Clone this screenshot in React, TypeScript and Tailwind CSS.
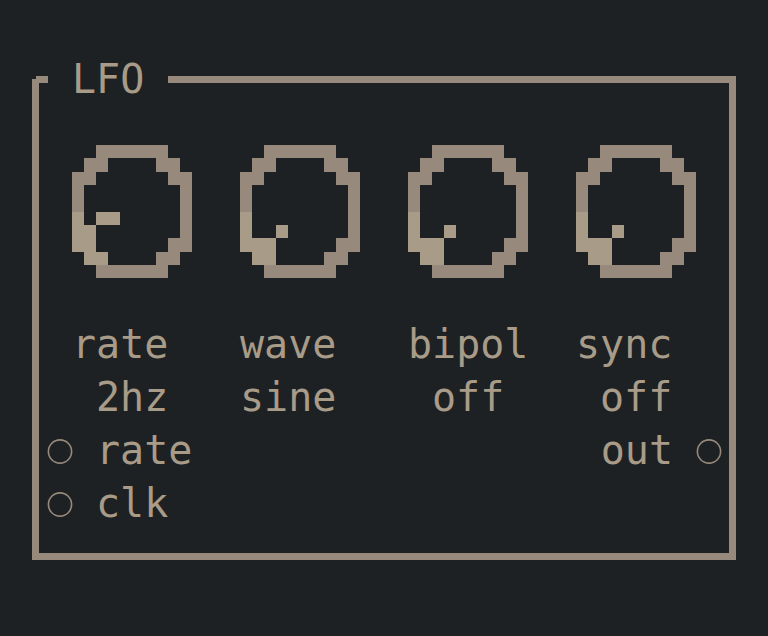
import React from "react";

const DARK = "#978a7c";
const LIGHT = "#a89b88";

const knobA = [
  "..DDDDDD..",
  ".DD....DD.",
  "DD......DD",
  "D........D",
  "D........D",
  "L.LL.....D",
  "LL.......D",
  "LL......DD",
  ".LL....DD.",
  "..DDDDDD..",
];

const knobB = [
  "..DDDDDD..",
  ".DD....DD.",
  "DD......DD",
  "D........D",
  "D........D",
  "L........D",
  "L..L.....D",
  "LLL.....DD",
  ".LL....DD.",
  "..DDDDDD..",
];

function Knob({ map }: { map: string[] }) {
  const rects: React.ReactNode[] = [];
  map.forEach((row, y) => {
    row.split("").forEach((c, x) => {
      if (c === ".") return;
      rects.push(
        <rect
          key={`${x}-${y}`}
          x={x}
          y={y}
          width={1}
          height={1}
          fill={c === "D" ? DARK : LIGHT}
        />
      );
    });
  });
  return (
    <svg
      width={120}
      height={133.33}
      viewBox="0 0 10 10"
      preserveAspectRatio="none"
      shapeRendering="crispEdges"
      className="block"
    >
      {rects}
    </svg>
  );
}

function Port() {
  return (
    <div className="w-[24px] h-[53px] flex items-center justify-center">
      <svg width={26} height={26} viewBox="0 0 26 26" className="block shrink-0" style={{ marginLeft: -1 }}>
        <circle cx={13} cy={13.5} r={11.6} fill="none" stroke={DARK} strokeWidth={1.6} />
      </svg>
    </div>
  );
}

export default function App() {
  const font = { fontFamily: "'DejaVu Sans Mono', 'Liberation Mono', monospace" };
  return (
    <div
      className="w-[768px] h-[636px] bg-[#1e2123] pt-[76px] pl-[32px] text-[#a89b88] text-[40px] leading-[53px] overflow-hidden"
      style={font}
    >
      <div className="relative w-[704px] h-[484px] border-[7px] border-[#978a7c]">
        <div className="absolute left-[-7px] top-[-7px] w-[4px] h-[3px] bg-[#1e2123]" />
        <div className="absolute left-[9px] top-[-30px] w-[120px] h-[53px] bg-[#1e2123] pl-[24px] whitespace-pre">
          LFO
        </div>

        <div className="flex gap-[48px] pl-[33px] mt-[62px] h-[133px]">
          <Knob map={knobA} />
          <Knob map={knobB} />
          <Knob map={knobB} />
          <Knob map={knobB} />
        </div>

        <div className="mt-[40px] pl-[33px] grid grid-cols-[168px_168px_168px_168px]">
          <div className="h-[53px]">rate</div>
          <div className="h-[53px]">wave</div>
          <div className="h-[53px]">bipol</div>
          <div className="h-[53px]">sync</div>
          <div className="h-[53px] pl-[24px]">2hz</div>
          <div className="h-[53px]">sine</div>
          <div className="h-[53px] pl-[24px]">off</div>
          <div className="h-[53px] pl-[24px]">off</div>
        </div>

        <div className="flex justify-between pl-[9px] pr-[8px] h-[53px]">
          <div className="flex gap-[24px]">
            <Port />
            <span>rate</span>
          </div>
          <div className="flex gap-[24px]">
            <span>out</span>
            <Port />
          </div>
        </div>
        <div className="flex pl-[9px] h-[53px]">
          <div className="flex gap-[24px]">
            <Port />
            <span>clk</span>
          </div>
        </div>
      </div>
    </div>
  );
}
